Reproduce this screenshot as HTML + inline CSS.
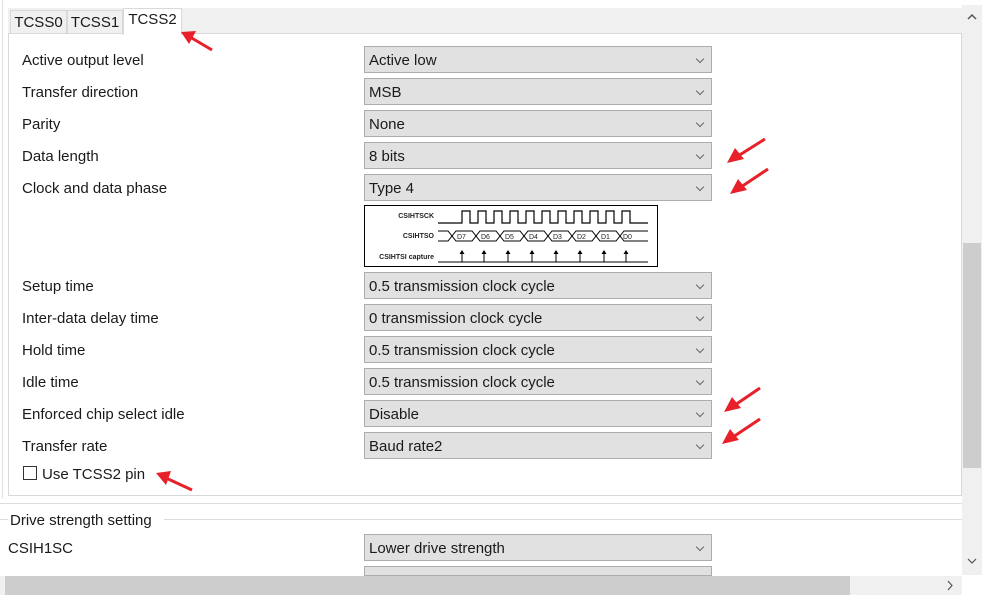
<!DOCTYPE html>
<html><head><style>
*{margin:0;padding:0;box-sizing:border-box}
body{width:988px;height:600px;background:#fff;position:relative;overflow:hidden;font-family:"Liberation Sans",sans-serif;font-size:15px;color:#1a1a1a}
.a{position:absolute}
.lbl{position:absolute;left:22px;line-height:20px;margin-top:2px}
.cb{position:absolute;left:364px;width:348px;height:27px;background:#e1e1e1;border:1px solid #adadad;padding-left:4px;line-height:26px;padding-top:1px}
.cb:after{content:"";position:absolute;right:8px;top:9px;width:5px;height:5px;border-right:1px solid #666;border-bottom:1px solid #666;transform:rotate(45deg)}
.tab{position:absolute;top:10px;height:24px;background:#f0f0f0;border:1px solid #d9d9d9;line-height:24px;text-align:center}
</style></head><body>
<div class="a" style="left:2px;top:0;width:1px;height:498px;background:#ddd"></div>
<div class="a" style="left:8px;top:8px;width:954px;height:26px;background:#f0f0f0;border-bottom:1px solid #d9d9d9"></div>
<div class="a" style="left:8px;top:34px;width:954px;height:462px;border:1px solid #d9d9d9;border-top:none"></div>
<div class="tab" style="left:10px;width:57px">TCSS0</div>
<div class="tab" style="left:67px;width:56px">TCSS1</div>
<div class="tab" style="left:123px;top:8px;height:27px;width:59px;background:#fff;border-bottom:none;line-height:22px">TCSS2</div>

<div class="lbl" style="top:49px">Active output level</div><div class="cb" style="top:46px">Active low</div>
<div class="lbl" style="top:81px">Transfer direction</div><div class="cb" style="top:78px">MSB</div>
<div class="lbl" style="top:113px">Parity</div><div class="cb" style="top:110px">None</div>
<div class="lbl" style="top:145px">Data length</div><div class="cb" style="top:142px">8 bits</div>
<div class="lbl" style="top:177px">Clock and data phase</div><div class="cb" style="top:174px">Type 4</div>

<svg class="a" style="left:364px;top:205px" width="294" height="62" viewBox="0 0 294 62">
<rect x="0.5" y="0.5" width="293" height="61" fill="#fff" stroke="#000"/>
<g font-family="Liberation Sans" font-size="7" font-weight="bold" fill="#222" text-anchor="end">
<text x="70" y="13">CSIHTSCK</text><text x="70" y="33">CSIHTSO</text><text x="70" y="54">CSIHTSI capture</text></g>
<path d="M74 18H98V6H106V18H114V6H122V18H130V6H138V18H146V6H154V18H162V6H170V18H178V6H186V18H194V6H202V18H210V6H218V18H226V6H234V18H242V6H250V18H258V6H266V18H284" fill="none" stroke="#000" stroke-width="1.2"/>
<path d="M74 26H84L88 31L84 36H74M88 31L92 26H108L112 31L108 36H92ZM112 31L116 26H132L136 31L132 36H116ZM136 31L140 26H156L160 31L156 36H140ZM160 31L164 26H180L184 31L180 36H164ZM184 31L188 26H204L208 31L204 36H188ZM208 31L212 26H228L232 31L228 36H212ZM232 31L236 26H252L256 31L252 36H236ZM256 31L260 26H284M256 31L260 36H284" fill="none" stroke="#000" stroke-width="1"/>
<g font-family="Liberation Sans" font-size="7" fill="#222"><text x="93" y="34">D7</text><text x="117" y="34">D6</text><text x="141" y="34">D5</text><text x="165" y="34">D4</text><text x="189" y="34">D3</text><text x="213" y="34">D2</text><text x="237" y="34">D1</text><text x="259" y="34">D0</text></g>
<path d="M74 57H284" stroke="#000"/>
<g stroke="#000"><path d="M98 57V47M120 57V47M144 57V47M168 57V47M192 57V47M216 57V47M240 57V47M262 57V47"/></g>
<g fill="#000"><path d="M95.5 49L98 45L100.5 49ZM117.5 49L120 45L122.5 49ZM141.5 49L144 45L146.5 49ZM165.5 49L168 45L170.5 49ZM189.5 49L192 45L194.5 49ZM213.5 49L216 45L218.5 49ZM237.5 49L240 45L242.5 49ZM259.5 49L262 45L264.5 49Z"/></g>
</svg>

<div class="lbl" style="top:275px">Setup time</div><div class="cb" style="top:272px">0.5 transmission clock cycle</div>
<div class="lbl" style="top:307px">Inter-data delay time</div><div class="cb" style="top:304px">0 transmission clock cycle</div>
<div class="lbl" style="top:339px">Hold time</div><div class="cb" style="top:336px">0.5 transmission clock cycle</div>
<div class="lbl" style="top:371px">Idle time</div><div class="cb" style="top:368px">0.5 transmission clock cycle</div>
<div class="lbl" style="top:403px">Enforced chip select idle</div><div class="cb" style="top:400px">Disable</div>
<div class="lbl" style="top:435px">Transfer rate</div><div class="cb" style="top:432px">Baud rate2</div>
<div class="a" style="left:23px;top:466px;width:14px;height:14px;border:1px solid #333;background:#fff"></div>
<div class="a" style="left:42px;top:465px;line-height:20px">Use TCSS2 pin</div>

<div class="a" style="left:0;top:503px;width:962px;height:1px;background:#ddd"></div>
<div class="a" style="left:0;top:519px;width:8px;height:1px;background:#ddd"></div>
<div class="a" style="left:164px;top:519px;width:798px;height:1px;background:#ddd"></div>
<div class="a" style="left:10px;top:511px;line-height:20px">Drive strength setting</div>
<div class="a" style="left:8px;top:539px;line-height:20px">CSIH1SC</div>
<div class="cb" style="top:534px">Lower drive strength</div>
<div class="cb" style="top:566px;height:10px"></div>

<div class="a" style="left:962px;top:5px;width:20px;height:570px;background:#f0f0f0"></div>
<div class="a" style="left:963px;top:243px;width:18px;height:225px;background:#cdcdcd"></div>
<svg class="a" style="left:962px;top:5px" width="20" height="570"><path d="M6 14L10 10L14 14" fill="none" stroke="#555" stroke-width="1.5"/><path d="M6 554L10 558L14 554" fill="none" stroke="#555" stroke-width="1.2"/></svg>
<div class="a" style="left:0;top:576px;width:962px;height:19px;background:#f0f0f0"></div>
<div class="a" style="left:5px;top:576px;width:845px;height:19px;background:#cdcdcd"></div>
<svg class="a" style="left:940px;top:576px" width="20" height="19"><path d="M8 5L12 9.5L8 14" fill="none" stroke="#555" stroke-width="1.2"/></svg>

<svg class="a" style="left:0;top:0" width="988" height="600">
<g stroke="#e8202a" stroke-width="3" fill="#e8202a">
<line x1="212" y1="50" x2="190" y2="37"/><path d="M181 32L196 31L189 44Z" stroke="none"/>
<line x1="765" y1="139" x2="738" y2="156"/><path d="M727 163L735 148L744 159Z" stroke="none"/>
<line x1="768" y1="169" x2="741" y2="187"/><path d="M730 194L738 179L747 190Z" stroke="none"/>
<line x1="760" y1="388" x2="735" y2="405"/><path d="M724 412L732 397L741 408Z" stroke="none"/>
<line x1="760" y1="419" x2="733" y2="437"/><path d="M722 444L730 429L739 440Z" stroke="none"/>
<line x1="192" y1="490" x2="166" y2="478"/><path d="M156 473L171 471L166 485Z" stroke="none"/>
</g></svg>
</body></html>
